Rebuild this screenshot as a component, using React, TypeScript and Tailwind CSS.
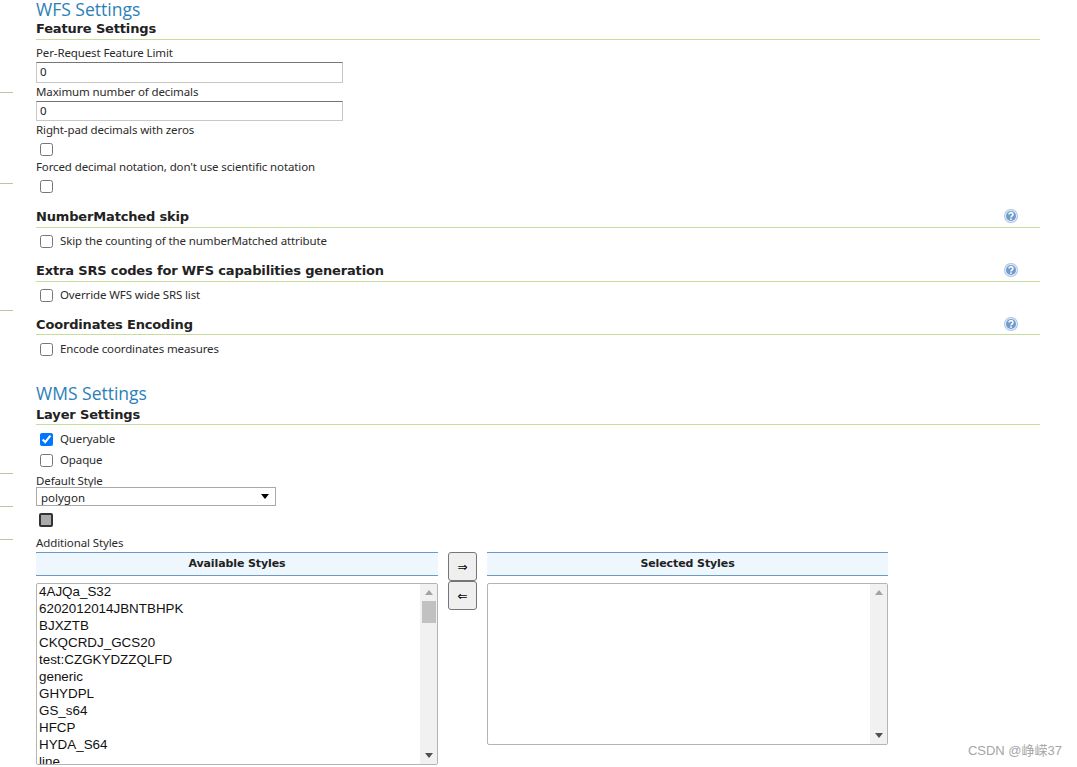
import React from "react";

const availableStyles = [
  "4AJQa_S32",
  "6202012014JBNTBHPK",
  "BJXZTB",
  "CKQCRDJ_GCS20",
  "test:CZGKYDZZQLFD",
  "generic",
  "GHYDPL",
  "GS_s64",
  "HFCP",
  "HYDA_S64",
  "line",
];

const gutterTicks = ["top-[92px]", "top-[183px]", "top-[310px]", "top-[473px]", "top-[506px]", "top-[539px]"];

function HelpIcon() {
  return (
    <svg width="16" height="16" viewBox="0 0 16 16" className="shrink-0 -translate-y-[1px]">
      <circle cx="8" cy="8" r="7" fill="#a9c5e6" />
      <circle cx="8" cy="8" r="6" fill="#e4eefa" />
      <circle cx="8" cy="8" r="5" fill="#6f9bcd" />
      <path d="M6 6.5a2 1.8 0 1 1 3 1.5c-.7.4-1 .7-1 1.4" fill="none" stroke="#fff" strokeWidth="1.5" />
      <rect x="7.2" y="10.4" width="1.6" height="1.5" fill="#fff" />
    </svg>
  );
}

function Label({ children }: { children: React.ReactNode }) {
  return (
    <div className="h-[17px] font-['Noto_Sans',sans-serif] text-[11.5px] leading-[16px] tracking-[-0.12px] text-[#2b2b2b]">
      {children}
    </div>
  );
}

function TextField({ short }: { short?: boolean }) {
  return (
    <input
      readOnly
      value="0"
      className={`block w-[307px] border border-[#c8c8c8] border-t-[#767676] px-[3px] pb-[2px] font-['Noto_Sans',sans-serif] text-[11.5px] text-[#222] outline-none ${short ? "h-[20px]" : "h-[21px]"}`}
    />
  );
}

function CheckRow({ label, checked }: { label: string; checked?: boolean }) {
  return (
    <label className="flex h-[21px] items-center pl-[4px]">
      <input type="checkbox" readOnly checked={!!checked} className="m-0 h-[13px] w-[13px] accent-[#0075ff]" />
      <span className="-mt-[1px] ml-[7px] font-['Noto_Sans',sans-serif] text-[11.5px] tracking-[-0.12px] text-[#2b2b2b]">
        {label}
      </span>
    </label>
  );
}

function SectionHead({ title, help, tight }: { title: string; help?: boolean; tight?: boolean }) {
  return (
    <div
      className={`box-content flex items-center justify-between border-b border-[#c6dd9c] pr-[21px] text-[13px] font-bold tracking-[-0.16px] text-[#222] ${tight ? "h-[19px]" : "h-[20px]"}`}
    >
      <span>{title}</span>
      {help && <HelpIcon />}
    </div>
  );
}

function PageTitle({ children }: { children: React.ReactNode }) {
  return <h2 className="h-[19px] font-['Open_Sans',sans-serif] text-[17.5px] leading-[19px] text-[#2b7fb8]">{children}</h2>;
}

function ScrollTrack({ thumb }: { thumb?: boolean }) {
  return (
    <div className="flex w-[17px] shrink-0 flex-col items-center justify-between bg-[#f1f1f1] py-[6px]">
      <div className="flex flex-col items-center">
        <div className="h-0 w-0 border-x-[4px] border-b-[5px] border-x-transparent border-b-[#a3a3a3]" />
        {thumb && <div className="mt-[6px] h-[22px] w-[14px] bg-[#c1c1c1]" />}
      </div>
      <div className="h-0 w-0 border-x-[4px] border-t-[5px] border-x-transparent border-t-[#505050]" />
    </div>
  );
}

function StylesHeader({ children }: { children: React.ReactNode }) {
  return (
    <div className="flex h-[24px] items-center justify-center border-y border-[#6d9ac5] bg-[#eef6fe] font-['DejaVu_Sans',sans-serif] text-[11px] font-bold tracking-[-0.1px] text-[#222]">
      {children}
    </div>
  );
}

function MoveButton({ glyph }: { glyph: string }) {
  return (
    <div className="flex h-[29px] w-[29px] items-center justify-center rounded-[3px] border border-[#767676] bg-[#efefef] font-['DejaVu_Sans',sans-serif] text-[12px] text-black">
      {glyph}
    </div>
  );
}

export default function App() {
  return (
    <div className="relative h-[767px] w-[1077px] overflow-hidden bg-white pl-[36px] font-['DejaVu_Sans',sans-serif]">
      {gutterTicks.map((t) => (
        <div key={t} className={`absolute left-0 h-px w-[13px] bg-[#b9c7a4] ${t}`} />
      ))}

      <div className="w-[1004px]">
        <PageTitle>WFS Settings</PageTitle>
        <SectionHead title="Feature Settings" />
        <div className="mt-[5px]">
          <Label>Per-Request Feature Limit</Label>
          <TextField />
          <div className="mt-[1px]">
            <Label>Maximum number of decimals</Label>
          </div>
          <TextField short />
          <div className="mt-[1px]">
            <Label>Right-pad decimals with zeros</Label>
          </div>
          <div className="flex h-[20px] items-center pl-[4px]">
            <input type="checkbox" readOnly checked={false} className="m-0 h-[13px] w-[13px]" />
          </div>
          <Label>Forced decimal notation, don't use scientific notation</Label>
          <div className="flex h-[20px] items-center pl-[4px]">
            <input type="checkbox" readOnly checked={false} className="m-0 h-[13px] w-[13px]" />
          </div>
        </div>

        <div className="mt-[11px]">
          <SectionHead title="NumberMatched skip" help />
          <div className="mt-[3px]">
            <CheckRow label="Skip the counting of the numberMatched attribute" />
          </div>
        </div>
        <div className="mt-[9px]">
          <SectionHead title="Extra SRS codes for WFS capabilities generation" help />
          <div className="mt-[3px]">
            <CheckRow label="Override WFS wide SRS list" />
          </div>
        </div>
        <div className="mt-[9px]">
          <SectionHead title="Coordinates Encoding" help tight />
          <div className="mt-[4px]">
            <CheckRow label="Encode coordinates measures" />
          </div>
        </div>

        <div className="mt-[24px]">
          <PageTitle>WMS Settings</PageTitle>
          <div className="mt-[2px]">
            <SectionHead title="Layer Settings" tight />
          </div>
        </div>
        <div className="mt-[4px]">
          <CheckRow label="Queryable" checked />
          <CheckRow label="Opaque" />
        </div>
        <div className="mt-[2px]">
          <Label>Default Style</Label>
        </div>
        <div className="relative -mt-[3px] flex h-[19px] w-[240px] items-center border border-[#a8a8a8] pl-[4px] pt-[2px] font-['Noto_Sans',sans-serif] text-[11.5px] text-[#222]">
          polygon
          <div className="absolute right-[6px] top-[6px] h-0 w-0 border-x-[4px] border-t-[5px] border-x-transparent border-t-black" />
        </div>
        <div className="ml-[3px] mt-[7px] h-[14px] w-[14px] rounded-[2px] border-2 border-[#333] bg-[#aaaaaa]" />
        <div className="mt-[8px]">
          <Label>Additional Styles</Label>
        </div>

        <div className="flex items-start font-['Liberation_Sans',sans-serif]">
          <div className="w-[402px]">
            <StylesHeader>Available Styles</StylesHeader>
            <div className="mt-[7px] flex h-[182px] overflow-hidden rounded-[2px] border border-[#b4b4b4]">
              <div className="-mt-[1px] flex-1 overflow-hidden pl-[2px] text-[13.4px] leading-[17px] text-[#111]">
                {availableStyles.map((s) => (
                  <div key={s} className="h-[17px]">
                    {s}
                  </div>
                ))}
              </div>
              <ScrollTrack thumb />
            </div>
          </div>

          <div className="ml-[10px] flex w-[39px] flex-col">
            <MoveButton glyph="⇒" />
            <MoveButton glyph="⇐" />
          </div>

          <div className="w-[401px]">
            <StylesHeader>Selected Styles</StylesHeader>
            <div className="mt-[7px] flex h-[162px] justify-end overflow-hidden rounded-[2px] border border-[#b4b4b4]">
              <ScrollTrack />
            </div>
          </div>
        </div>
      </div>

      <div className="absolute right-[15px] top-[743px] font-['Liberation_Sans','Noto_Sans_CJK_SC',sans-serif] text-[13px] leading-[16px] text-[#a6a6a6]">
        CSDN @峥嵘37
      </div>
    </div>
  );
}
